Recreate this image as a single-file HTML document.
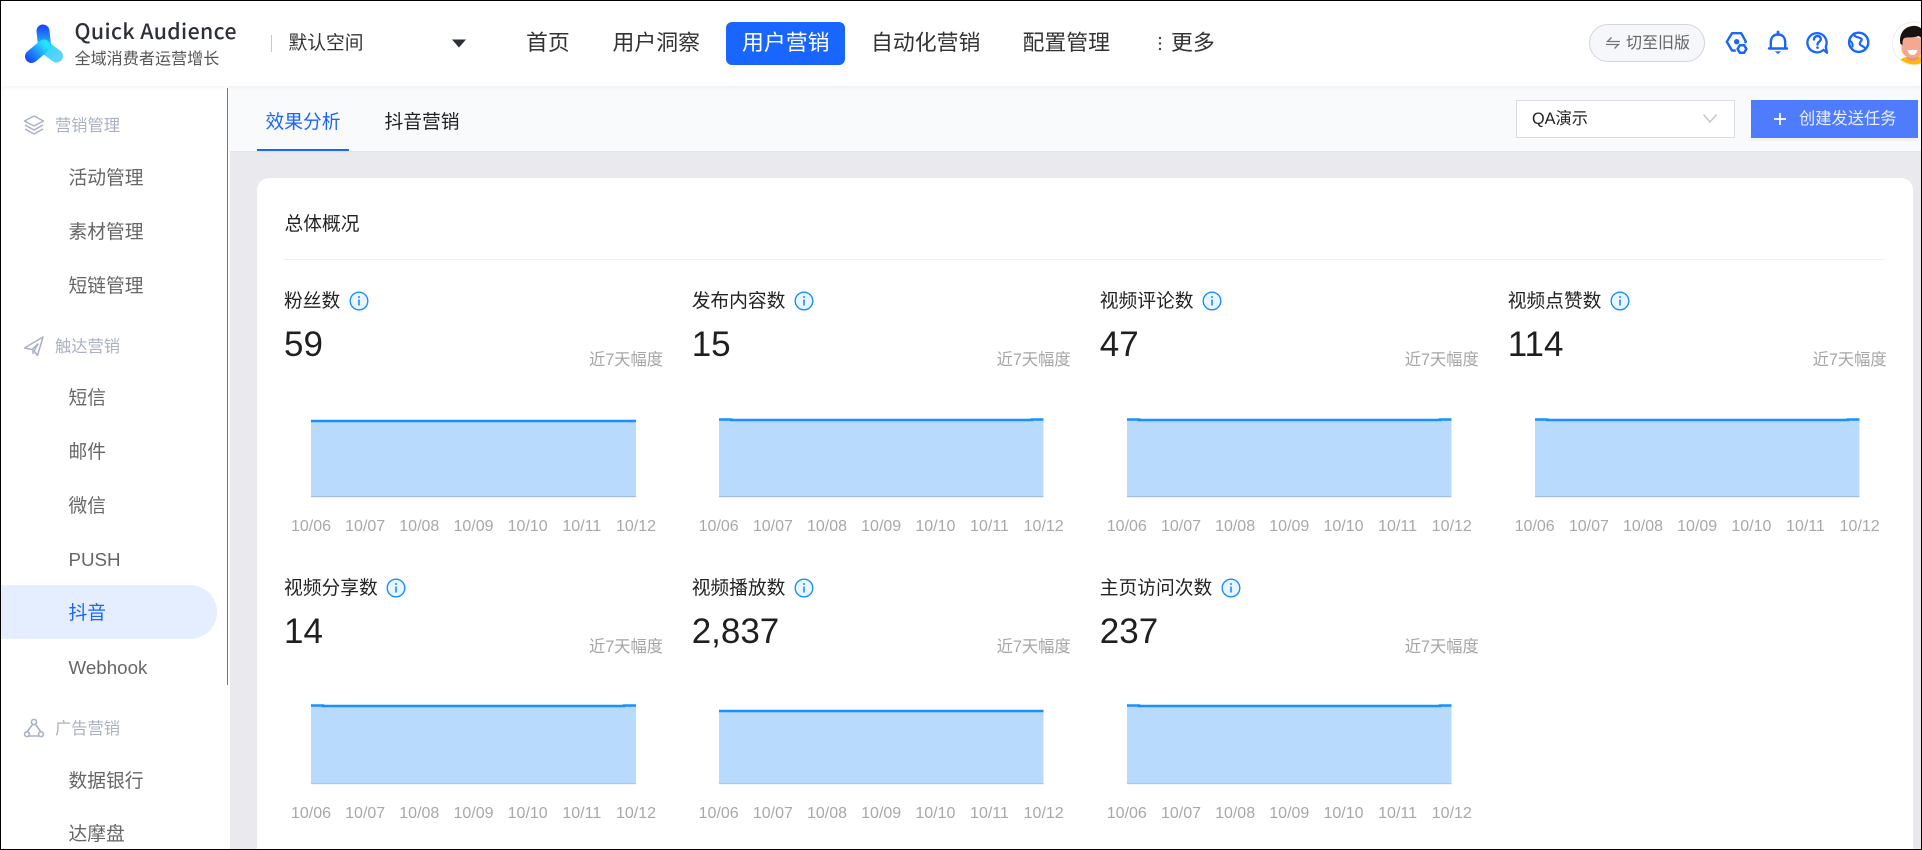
<!DOCTYPE html>
<html lang="zh-CN">
<head>
<meta charset="utf-8">
<title>Quick Audience</title>
<style>
html,body{margin:0;padding:0;width:1922px;height:850px;overflow:hidden;background:#fff}
body{font-family:"Liberation Sans","Noto Sans CJK SC",sans-serif;position:relative}
#root{position:absolute;left:0;top:0;width:1922px;height:850px;overflow:hidden;background:#e9e9ee}
.t{position:absolute;white-space:nowrap;line-height:30px;height:30px}
#hdr{position:absolute;left:0;top:0;width:1922px;height:86px;background:#fff;box-shadow:0 1px 6px rgba(0,0,0,.05);z-index:3}
.nav{font-size:21.875px;color:#333;top:28px}
#act{position:absolute;left:726px;top:22px;width:119px;height:43px;background:#1966ff;border-radius:6px}
#side{position:absolute;left:0;top:86px;width:230px;height:764px;background:#fff}
#bar{position:absolute;left:227px;top:88px;width:1px;height:597px;background:#777;z-index:4}
#actm{position:absolute;left:0;top:585px;width:217px;height:54px;background:#e4eefe;border-radius:0 27px 27px 0;z-index:1}
.g{font-size:16.25px;color:#a9b1c2;left:55px;z-index:2}
.i{font-size:18.75px;color:#666;left:68.5px;z-index:2}
#tabs{position:absolute;left:230px;top:86px;width:1692px;height:65px;background:#f9fafc;box-shadow:0 1px 1px rgba(0,0,0,.03)}
.tab{font-size:18.75px;top:107px;z-index:2}
#card{position:absolute;left:257px;top:178px;width:1656px;height:700px;background:#fff;border-radius:12px}
.m{position:absolute;width:400px;height:270px}
.m .tt{position:absolute;left:0;top:6px;font-size:18.75px;line-height:30px;color:#222;white-space:nowrap;display:flex;align-items:center}
.m .tt svg{margin-left:8.5px}
.m .v{position:absolute;left:0;top:45px;font-size:35px;line-height:40px;color:#1f1f1f;white-space:nowrap}
.m .r{position:absolute;right:21px;top:65px;font-size:16.25px;line-height:30px;color:#a6a6a6;white-space:nowrap}
.m .ch{position:absolute;left:0;top:0}
.m .x{position:absolute;top:233px;width:60px;text-align:center;font-size:16px;line-height:28px;color:#a8a8a8}
#frame{position:absolute;left:0;top:0;width:1920px;height:848px;border:1px solid #000;z-index:10;pointer-events:none}
</style>
</head>
<body>
<div id="root">

<div id="hdr">
  <svg style="position:absolute;left:0;top:0" width="80" height="80" viewBox="0 0 80 80">
    <defs>
      <linearGradient id="a" gradientUnits="userSpaceOnUse" x1="44" y1="26" x2="44" y2="50"><stop offset="0" stop-color="#1a47ff"/><stop offset="1" stop-color="#25d8ff"/></linearGradient>
      <linearGradient id="b" gradientUnits="userSpaceOnUse" x1="28" y1="60" x2="44" y2="44"><stop offset="0" stop-color="#1a47ff"/><stop offset="1" stop-color="#25e0ff"/></linearGradient>
      <linearGradient id="c" gradientUnits="userSpaceOnUse" x1="42" y1="44" x2="60" y2="58"><stop offset="0" stop-color="#25d8ff"/><stop offset="1" stop-color="#5fd2ff"/></linearGradient>
    </defs>
    <path d="M43 46L56.5 56" stroke="url(#c)" stroke-width="13" stroke-linecap="round" fill="none"/>
    <path d="M43 31L44.5 45" stroke="url(#a)" stroke-width="13" stroke-linecap="round" fill="none"/>
    <path d="M31.5 56.5L44 46" stroke="url(#b)" stroke-width="13" stroke-linecap="round" fill="none"/>
  </svg>
  <div class="t" style="left:74.5px;top:16px;font-family:'Noto Sans CJK SC',sans-serif;font-size:21.25px;font-weight:500;color:#2b2f36;letter-spacing:.4px">Quick Audience</div>
  <div class="t" style="left:74.5px;top:44px;font-size:16.1px;color:#555">全域消费者运营增长</div>
  <div style="position:absolute;left:271px;top:35px;width:1px;height:17px;background:#c9c9c9"></div>
  <div class="t" style="left:288.5px;top:28px;font-size:18.75px;color:#333">默认空间</div>
  <svg style="position:absolute;left:451px;top:39px" width="16" height="9" viewBox="0 0 16 9"><path d="M1 0.5H15L8 8.5Z" fill="#2b2f3a"/></svg>
  <div class="t nav" style="left:526px">首页</div>
  <div class="t nav" style="left:612.5px">用户洞察</div>
  <div id="act"></div>
  <div class="t nav" style="left:742px;color:#fff">用户营销</div>
  <div class="t nav" style="left:871px">自动化营销</div>
  <div class="t nav" style="left:1022.5px">配置管理</div>
  <svg style="position:absolute;left:1157px;top:35px" width="6" height="17" viewBox="0 0 6 17"><circle cx="3" cy="3" r="1.2" fill="#444"/><circle cx="3" cy="8.5" r="1.2" fill="#444"/><circle cx="3" cy="14" r="1.2" fill="#444"/></svg>
  <div class="t nav" style="left:1171px">更多</div>

  <div style="position:absolute;left:1589px;top:24px;width:114px;height:36px;border:1px solid #d4d5d8;border-radius:19px;background:#f6f7fa"></div>
  <svg style="position:absolute;left:1605px;top:36px" width="16" height="14" viewBox="0 0 16 14"><path d="M15 5.5H2.5L6.5 1.5M1 8.5H13.5L9.5 12.5" fill="none" stroke="#777" stroke-width="1.3"/></svg>
  <div class="t" style="left:1626px;top:28.5px;font-size:16px;color:#666">切至旧版</div>

  <svg style="position:absolute;left:1722px;top:28px" width="150" height="30" viewBox="0 0 150 30" fill="none" stroke="#1966ff" stroke-width="2.4" stroke-linejoin="round" stroke-linecap="round">
    <path d="M4.8 13.8L10 5.2H19.2L23.8 13.5L19 22.5H10Z"/>
    <circle cx="20" cy="20.8" r="6.5" fill="#fff" stroke="none"/>
    <circle cx="14.7" cy="13.7" r="2.7" fill="#1966ff" stroke="none"/>
    <path d="M17.8 17.2H22.2L24.4 21L22.2 24.8H17.8L15.6 21Z" stroke-width="2.5"/>
    <path d="M48.8 20.5V14.5C48.8 9.5 51.5 6.5 56 6.5S63.2 9.5 63.2 14.5V20.5"/>
    <path d="M47 20.5H65"/>
    <path d="M56 4V6.5" stroke-width="2.8"/>
    <path d="M52.8 23.4H59.2L56 26Z" fill="#1966ff" stroke="none"/>
    <path d="M105 24.8L101.5 21.8A9.6 9.6 0 1 1 103.8 18.6Z" stroke-width="2.3"/>
    <path d="M92 11.5C92 9 94 8 95.5 8C98 8 99 10 98.8 11.5C98.5 13.5 95.5 14 95.5 16.5"/>
    <circle cx="95.5" cy="19.6" r="1.3" fill="#1966ff" stroke="none"/>
    <circle cx="136.7" cy="14.3" r="9.6"/>
    <path d="M132 5.5C132 9.5 136.5 9 139 10.5C141.5 12 136.5 14.5 138 16.5C139.5 18.5 143 18 143.5 21.5" stroke-width="2.2"/>
    <path d="M127.5 12.5C129.5 13.5 131 15.5 130.5 18.5" stroke-width="2"/>
  </svg>

  <svg style="position:absolute;left:1890px;top:20px" width="31" height="47" viewBox="0 0 31 47">
    <defs><clipPath id="av"><circle cx="24" cy="23.5" r="21"/></clipPath></defs>
    <circle cx="24" cy="23.5" r="21.5" fill="#fff" stroke="#ececec"/>
    <g clip-path="url(#av)">
      <path d="M5 47C8 38 17 36 24 36S40 38 44 47Z" fill="#ffb900"/>
      <g transform="translate(-1.5 2)">
        <path d="M18 30H30V36C27 40 21 40 18 36Z" fill="#e8917c"/>
        <path d="M13 18C13 14 34 14 35 18V27C35 33 29 36 24 36S13 33 13 27Z" fill="#f4a890"/>
        <path d="M12 22C10 14 14 5 24 4C33 3 38 10 37 22L34 22C34 18 33 15 30 14C25 16 18 15 16 16C14 17 14 20 14 23Z" fill="#171311"/>
        <path d="M19 28H29C28 32 26 33 24 33S20 32 19 28Z" fill="#fff"/>
      </g>
    </g>
  </svg>
</div>

<div id="side"></div>
<div id="bar"></div>
<div id="actm"></div>

<svg style="position:absolute;left:22px;top:113px;z-index:2" width="24" height="24" viewBox="0 0 24 24" fill="none" stroke="#a9b1c2" stroke-width="1.5" stroke-linejoin="round"><path d="M12 3L21.5 8L12 13L2.5 8Z"/><path d="M3 12L12 17L21 12"/><path d="M3 16L12 21L21 16"/></svg>
<div class="t g" style="top:110.5px">营销管理</div>
<div class="t i" style="top:162.5px">活动管理</div>
<div class="t i" style="top:216.5px">素材管理</div>
<div class="t i" style="top:270.5px">短链管理</div>

<svg style="position:absolute;left:22px;top:334px;z-index:2" width="24" height="24" viewBox="0 0 24 24" fill="none" stroke="#a9b1c2" stroke-width="1.5" stroke-linejoin="round"><path d="M21 3L2.5 14L10 15.5L16 10L12 17L15.5 21.5Z" /><path d="M11 15.5V20"/></svg>
<div class="t g" style="top:331.5px">触达营销</div>
<div class="t i" style="top:382.5px">短信</div>
<div class="t i" style="top:436.5px">邮件</div>
<div class="t i" style="top:490.5px">微信</div>
<div class="t i" style="top:544.5px">PUSH</div>
<div class="t i" style="top:598px;color:#1966ff">抖音</div>
<div class="t i" style="top:652.5px">Webhook</div>

<svg style="position:absolute;left:22px;top:716px;z-index:2" width="24" height="24" viewBox="0 0 24 24" fill="none" stroke="#a9b1c2" stroke-width="1.6" stroke-linejoin="round"><circle cx="12" cy="6" r="2.6"/><path d="M10.5 8.5L5 16M13.5 8.5L19 16M7 20H17"/><circle cx="5" cy="18.2" r="2.4"/><circle cx="19" cy="18.2" r="2.4"/></svg>
<div class="t g" style="top:713.5px">广告营销</div>
<div class="t i" style="top:765.5px">数据银行</div>
<div class="t i" style="top:819px">达摩盘</div>

<div id="tabs"></div>
<div class="t tab" style="left:265.5px;color:#1966ff">效果分析</div>
<div class="t tab" style="left:384.5px;color:#222">抖音营销</div>
<div style="position:absolute;left:257px;top:149px;width:92px;height:2px;background:#1966ff;z-index:2"></div>

<div style="position:absolute;left:1516px;top:100px;width:217px;height:36px;background:#fff;border:1px solid #dcdde0;z-index:2"></div>
<div class="t" style="left:1532px;top:104px;font-size:16.25px;color:#222;z-index:3">QA演示</div>
<svg style="position:absolute;left:1702px;top:113px;z-index:3" width="16" height="11" viewBox="0 0 16 11"><path d="M1.5 1.5L8 9L14.5 1.5" fill="none" stroke="#c4c6cb" stroke-width="1.4"/></svg>
<div style="position:absolute;left:1751px;top:100px;width:167px;height:38px;background:#4f7cff;box-shadow:0 3px 0 #f1f1f3;z-index:2"></div>
<svg style="position:absolute;left:1773px;top:112px;z-index:3" width="14" height="14" viewBox="0 0 14 14"><path d="M7 1V13M1 7H13" stroke="#fff" stroke-width="1.7"/></svg>
<div class="t" style="left:1799px;top:104px;font-size:16.25px;color:#e9efff;z-index:3">创建发送任务</div>

<div id="card"></div>
<div class="t" style="left:284.5px;top:208.5px;font-size:18.75px;color:#222">总体概况</div>
<div style="position:absolute;left:284px;top:259px;width:1601px;height:1px;background:#efefef"></div>

<!-- Row 1 -->
<div class="m" style="left:284px;top:280px">
  <div class="tt">粉丝数<svg width="20" height="20" viewBox="0 0 20 20"><circle cx="10" cy="10" r="8.8" fill="#eaf6ff" stroke="#1890ff" stroke-width="1.4"/><circle cx="10" cy="6" r="1" fill="#1890ff"/><path d="M10 8.5V14.5" stroke="#1890ff" stroke-width="1.6"/></svg></div>
  <div class="v">59</div><div class="r">近7天幅度</div>
  <svg class="ch" width="400" height="230" viewBox="0 0 400 230"><rect x="27" y="141" width="325" height="76" fill="#b8dbfd"/><rect x="27" y="216" width="325" height="1.2" fill="#a2bedb"/><path d="M27 141H352" stroke="#1890ff" stroke-width="2.6" fill="none"/></svg>
  <div class="x" style="left:-3px">10/06</div><div class="x" style="left:51.2px">10/07</div><div class="x" style="left:105.3px">10/08</div><div class="x" style="left:159.5px">10/09</div><div class="x" style="left:213.7px">10/10</div><div class="x" style="left:267.8px">10/11</div><div class="x" style="left:322px">10/12</div>
</div>
<div class="m" style="left:691.7px;top:280px">
  <div class="tt">发布内容数<svg width="20" height="20" viewBox="0 0 20 20"><circle cx="10" cy="10" r="8.8" fill="#eaf6ff" stroke="#1890ff" stroke-width="1.4"/><circle cx="10" cy="6" r="1" fill="#1890ff"/><path d="M10 8.5V14.5" stroke="#1890ff" stroke-width="1.6"/></svg></div>
  <div class="v">15</div><div class="r">近7天幅度</div>
  <svg class="ch" width="400" height="230" viewBox="0 0 400 230"><rect x="27" y="139.5" width="324.5" height="77.5" fill="#b8dbfd"/><rect x="27" y="216" width="324.5" height="1.2" fill="#a2bedb"/><path d="M27 139.5H39L39 140H340L340 139.5H351.5" stroke="#1890ff" stroke-width="2.6" fill="none"/></svg>
  <div class="x" style="left:-3px">10/06</div><div class="x" style="left:51.2px">10/07</div><div class="x" style="left:105.3px">10/08</div><div class="x" style="left:159.5px">10/09</div><div class="x" style="left:213.7px">10/10</div><div class="x" style="left:267.8px">10/11</div><div class="x" style="left:322px">10/12</div>
</div>
<div class="m" style="left:1099.8px;top:280px">
  <div class="tt">视频评论数<svg width="20" height="20" viewBox="0 0 20 20"><circle cx="10" cy="10" r="8.8" fill="#eaf6ff" stroke="#1890ff" stroke-width="1.4"/><circle cx="10" cy="6" r="1" fill="#1890ff"/><path d="M10 8.5V14.5" stroke="#1890ff" stroke-width="1.6"/></svg></div>
  <div class="v">47</div><div class="r">近7天幅度</div>
  <svg class="ch" width="400" height="230" viewBox="0 0 400 230"><rect x="27" y="139.5" width="324.5" height="77.5" fill="#b8dbfd"/><rect x="27" y="216" width="324.5" height="1.2" fill="#a2bedb"/><path d="M27 139.5H39L39 140H340L340 139.5H351.5" stroke="#1890ff" stroke-width="2.6" fill="none"/></svg>
  <div class="x" style="left:-3px">10/06</div><div class="x" style="left:51.2px">10/07</div><div class="x" style="left:105.3px">10/08</div><div class="x" style="left:159.5px">10/09</div><div class="x" style="left:213.7px">10/10</div><div class="x" style="left:267.8px">10/11</div><div class="x" style="left:322px">10/12</div>
</div>
<div class="m" style="left:1507.7px;top:280px">
  <div class="tt">视频点赞数<svg width="20" height="20" viewBox="0 0 20 20"><circle cx="10" cy="10" r="8.8" fill="#eaf6ff" stroke="#1890ff" stroke-width="1.4"/><circle cx="10" cy="6" r="1" fill="#1890ff"/><path d="M10 8.5V14.5" stroke="#1890ff" stroke-width="1.6"/></svg></div>
  <div class="v">114</div><div class="r">近7天幅度</div>
  <svg class="ch" width="400" height="230" viewBox="0 0 400 230"><rect x="27" y="139.5" width="324.5" height="77.5" fill="#b8dbfd"/><rect x="27" y="216" width="324.5" height="1.2" fill="#a2bedb"/><path d="M27 139.5H39L39 140H340L340 139.5H351.5" stroke="#1890ff" stroke-width="2.6" fill="none"/></svg>
  <div class="x" style="left:-3px">10/06</div><div class="x" style="left:51.2px">10/07</div><div class="x" style="left:105.3px">10/08</div><div class="x" style="left:159.5px">10/09</div><div class="x" style="left:213.7px">10/10</div><div class="x" style="left:267.8px">10/11</div><div class="x" style="left:322px">10/12</div>
</div>

<!-- Row 2 -->
<div class="m" style="left:284px;top:567px">
  <div class="tt">视频分享数<svg width="20" height="20" viewBox="0 0 20 20"><circle cx="10" cy="10" r="8.8" fill="#eaf6ff" stroke="#1890ff" stroke-width="1.4"/><circle cx="10" cy="6" r="1" fill="#1890ff"/><path d="M10 8.5V14.5" stroke="#1890ff" stroke-width="1.6"/></svg></div>
  <div class="v">14</div><div class="r">近7天幅度</div>
  <svg class="ch" width="400" height="230" viewBox="0 0 400 230"><rect x="27" y="138.5" width="325" height="78.5" fill="#b8dbfd"/><rect x="27" y="216" width="325" height="1.2" fill="#aec6de"/><path d="M27 138.5H39L39 139H340L340 138.5H352" stroke="#1890ff" stroke-width="2.6" fill="none"/></svg>
  <div class="x" style="left:-3px">10/06</div><div class="x" style="left:51.2px">10/07</div><div class="x" style="left:105.3px">10/08</div><div class="x" style="left:159.5px">10/09</div><div class="x" style="left:213.7px">10/10</div><div class="x" style="left:267.8px">10/11</div><div class="x" style="left:322px">10/12</div>
</div>
<div class="m" style="left:691.7px;top:567px">
  <div class="tt">视频播放数<svg width="20" height="20" viewBox="0 0 20 20"><circle cx="10" cy="10" r="8.8" fill="#eaf6ff" stroke="#1890ff" stroke-width="1.4"/><circle cx="10" cy="6" r="1" fill="#1890ff"/><path d="M10 8.5V14.5" stroke="#1890ff" stroke-width="1.6"/></svg></div>
  <div class="v">2,837</div><div class="r">近7天幅度</div>
  <svg class="ch" width="400" height="230" viewBox="0 0 400 230"><rect x="27" y="144" width="324.5" height="73" fill="#b8dbfd"/><rect x="27" y="216" width="324.5" height="1.2" fill="#aec6de"/><path d="M27 144H351.5" stroke="#1890ff" stroke-width="2.6" fill="none"/></svg>
  <div class="x" style="left:-3px">10/06</div><div class="x" style="left:51.2px">10/07</div><div class="x" style="left:105.3px">10/08</div><div class="x" style="left:159.5px">10/09</div><div class="x" style="left:213.7px">10/10</div><div class="x" style="left:267.8px">10/11</div><div class="x" style="left:322px">10/12</div>
</div>
<div class="m" style="left:1099.8px;top:567px">
  <div class="tt">主页访问次数<svg width="20" height="20" viewBox="0 0 20 20"><circle cx="10" cy="10" r="8.8" fill="#eaf6ff" stroke="#1890ff" stroke-width="1.4"/><circle cx="10" cy="6" r="1" fill="#1890ff"/><path d="M10 8.5V14.5" stroke="#1890ff" stroke-width="1.6"/></svg></div>
  <div class="v">237</div><div class="r">近7天幅度</div>
  <svg class="ch" width="400" height="230" viewBox="0 0 400 230"><rect x="27" y="138.5" width="324.5" height="78.5" fill="#b8dbfd"/><rect x="27" y="216" width="324.5" height="1.2" fill="#aec6de"/><path d="M27 138.5H39L39 139H340L340 138.5H351.5" stroke="#1890ff" stroke-width="2.6" fill="none"/></svg>
  <div class="x" style="left:-3px">10/06</div><div class="x" style="left:51.2px">10/07</div><div class="x" style="left:105.3px">10/08</div><div class="x" style="left:159.5px">10/09</div><div class="x" style="left:213.7px">10/10</div><div class="x" style="left:267.8px">10/11</div><div class="x" style="left:322px">10/12</div>
</div>

<div id="frame"></div>
</div>
</body>
</html>
